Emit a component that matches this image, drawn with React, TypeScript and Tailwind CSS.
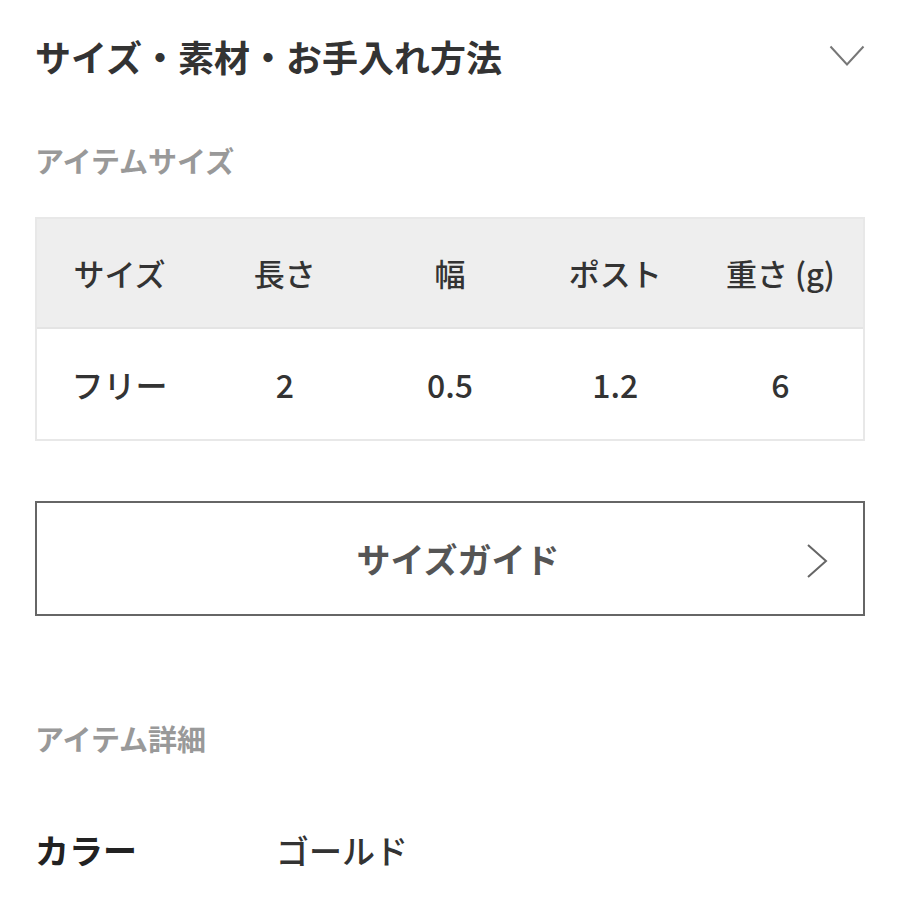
import React from "react";

const font = { fontFamily: '"Noto Sans CJK JP", "Noto Sans", sans-serif' };

export default function App() {
  const headers = ["サイズ", "長さ", "幅", "ポスト", "重さ (g)"];
  const values = ["フリー", "2", "0.5", "1.2", "6"];
  return (
    <div className="w-[900px] h-[900px] bg-white overflow-hidden" style={font}>
      <div className="px-[35px]">
        <div className="flex items-center justify-between h-[112px]">
          <h2 className="text-[36px] font-bold text-[#333] leading-none">サイズ・素材・お手入れ方法</h2>
          <svg width="36" height="24" viewBox="0 0 36 24">
            <path d="M1.5 2.5 L18 20.5 L34.5 2.5" fill="none" stroke="#777" strokeWidth="2" />
          </svg>
        </div>
        <div className="mt-[34px] text-[29px] font-bold text-[#999] leading-none">アイテムサイズ</div>
        <div className="mt-[42px] border-2 border-[#e8e8e8]">
          <div className="grid grid-cols-5 h-[110px] bg-[#eeeeee] items-center border-b-2 border-[#e4e4e4]">
            {headers.map((h) => (
              <div key={h} className="text-center text-[31px] font-medium text-[#333]">{h}</div>
            ))}
          </div>
          <div className="grid grid-cols-5 h-[110px] items-center">
            {values.map((v) => (
              <div key={v} className="text-center text-[32px] font-medium text-[#333]">{v}</div>
            ))}
          </div>
        </div>
        <div className="mt-[60px] border-2 border-[#666] h-[115px] flex items-center justify-center relative">
          <span className="pl-[16px] text-[34px] font-bold text-[#555]">サイズガイド</span>
          <svg width="24" height="36" viewBox="0 0 24 36" className="absolute right-[34px] top-[40px]">
            <path d="M3 2 L21 18 L3 34" fill="none" stroke="#666" strokeWidth="2" />
          </svg>
        </div>
        <div className="mt-[108px] text-[29px] font-bold text-[#999] leading-none">アイテム詳細</div>
        <div className="mt-[80px] flex items-center">
          <div className="w-[241px] text-[34px] font-bold text-[#222] leading-none">カラー</div>
          <div className="text-[33px] font-medium text-[#333] leading-none">ゴールド</div>
        </div>
      </div>
    </div>
  );
}
